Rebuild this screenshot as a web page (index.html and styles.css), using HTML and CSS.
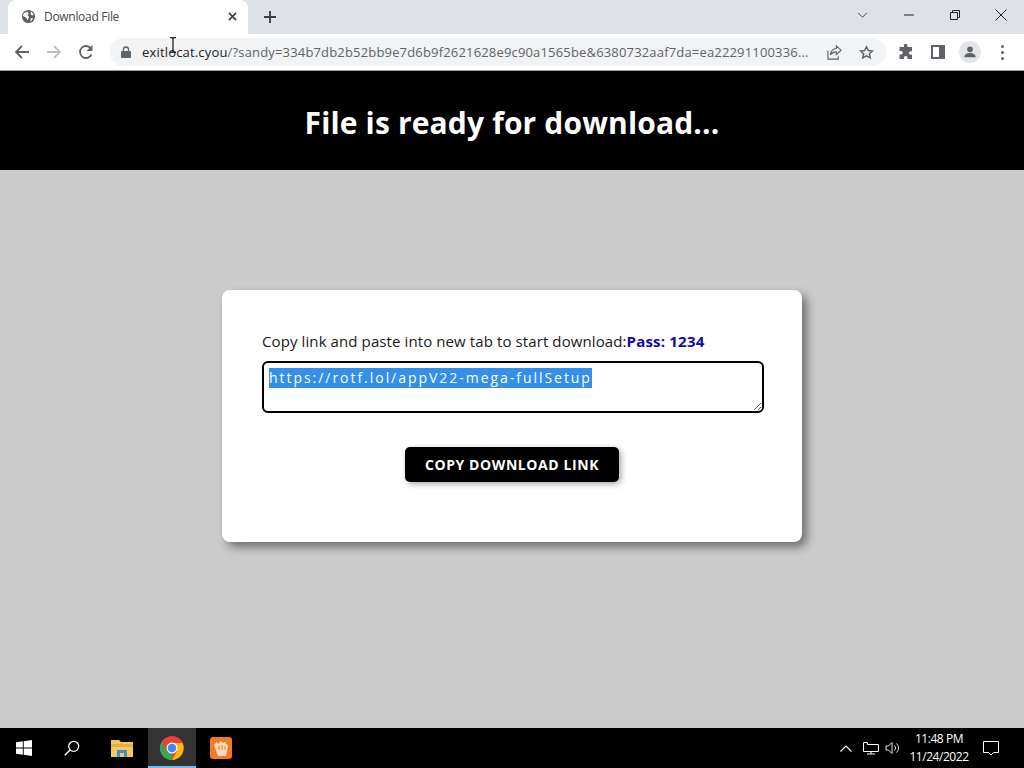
FILE: index.html
```html
<!DOCTYPE html>
<html lang="en">
<head>
<meta charset="utf-8">
<title>Download File</title>
<link rel="stylesheet" href="styles.css">
</head>
<body>
<div class="screen">
  <div class="tabstrip">
    <div class="tab">
      <svg class="favicon" viewBox="0 0 16 16"><circle cx="8" cy="8" r="7" fill="#5f6368"/><path d="M3 4.500 6.500 3l2 1.500L7 6.500 8.500 8.500 7 12 5.500 9 2 7.500zM10.500 2.500l3 3-1 1.500-2-1zM10 10l3-.5-2.500 4z" fill="#fff"/></svg>
      <span class="tab-title">Download File</span>
      <svg class="tab-close" viewBox="0 0 10 10"><path d="M1 1l8 8M9 1l-8 8" stroke="#3c4043" stroke-width="1.800"/></svg>
    </div>
    <svg class="new-tab" viewBox="0 0 12 12"><path d="M6 0v12M0 6h12" stroke="#3c4043" stroke-width="1.900"/></svg>
    <div class="window-controls">
      <svg class="ctl chevron" viewBox="0 0 12 8"><path d="M1 1l5 5 5-5" fill="none" stroke="#3c4043" stroke-width="1.100"/></svg>
      <svg class="ctl minimize" viewBox="0 0 10 2"><path d="M0 1h10" stroke="#222" stroke-width="1"/></svg>
      <svg class="ctl restore" viewBox="0 0 10 10"><path d="M.5 2.500h7v7h-7zM2.500 2.500v-2h7v7h-2" fill="none" stroke="#222" stroke-width="1"/></svg>
      <svg class="ctl closex" viewBox="0 0 12 12"><path d="M.5.500l11 11M11.500.500l-11 11" stroke="#222" stroke-width="1"/></svg>
    </div>
  </div>
  <div class="toolbar">
    <svg class="nav" viewBox="0 0 16 16"><path d="M15 8H2M8 2 2 8l6 6" fill="none" stroke="#5f6368" stroke-width="1.800"/></svg>
    <svg class="nav" viewBox="0 0 16 16"><path d="M1 8h13M8 2l6 6-6 6" fill="none" stroke="#bdc1c6" stroke-width="1.800"/></svg>
    <svg class="nav" viewBox="0 0 16 16"><path d="M13.500 10.500A6 6 0 1 1 13 4.600" fill="none" stroke="#5f6368" stroke-width="1.800"/><path d="M14.500 1v6h-6z" fill="#5f6368"/></svg>
    <div class="omnibox">
      <svg class="lock" viewBox="0 0 10 12"><path d="M2.500 5V3.500a2.500 2.500 0 0 1 5 0V5" fill="none" stroke="#5f6368" stroke-width="1.300"/><rect y="5" width="10" height="7" rx="1" fill="#5f6368"/></svg>
      <span class="url"><span class="host">exitlocat.cyou</span>/?sandy=334b7db2b52bb9e7d6b9f2621628e9c90a1565be&amp;6380732aaf7da=ea22291100336...</span>
      <svg class="omni-icon" viewBox="0 0 16 16"><path d="M10 1l5 4.500L10 10V7.300C7 7.300 5 8.300 3.500 10.500 4 7 6 4 10 3.700zM1 6v9h11v-3" fill="none" stroke="#5f6368" stroke-width="1.200"/></svg>
      <svg class="omni-icon star" viewBox="0 0 16 16"><path d="M8 1.800l1.900 4.100 4.500.5-3.300 3 .9 4.400L8 11.600l-4 2.200.9-4.400-3.300-3 4.500-.5z" fill="none" stroke="#5f6368" stroke-width="1.500"/></svg>
    </div>
    <svg class="ext" viewBox="0 0 16 16"><path d="M6 1.500a1.700 1.700 0 0 1 3.400 0V3H14v4.200h-1.300a1.800 1.800 0 0 0 0 3.600H14V15H9.500v-1.300a1.800 1.800 0 0 0-3.600 0V15H1.500v-4.500H3a1.800 1.800 0 0 0 0-3.600H1.500V3H6z" fill="#5f6368"/></svg>
    <svg class="side" viewBox="0 0 14 14"><rect x="1" y="1" width="12" height="12" fill="none" stroke="#5f6368" stroke-width="2"/><rect x="8" y="1" width="5" height="12" fill="#5f6368"/></svg>
    <div class="avatar"><svg viewBox="0 0 16 16"><circle cx="8" cy="5" r="3.200" fill="#5f6368"/><path d="M1.500 14c0-3.500 3-5 6.500-5s6.500 1.500 6.500 5z" fill="#5f6368"/></svg></div>
    <div class="kebab"><i></i><i></i><i></i></div>
  </div>
  <header class="banner"><h1>File is ready for download...</h1></header>
  <main class="stage">
    <section class="card">
      <p class="lead">Copy link and paste into new tab to start download:<strong>Pass: 1234</strong></p>
      <div class="linkbox"><span class="selected">https://rotf.lol/appV22-mega-fullSetup</span></div>
      <div class="actions"><button class="copy">COPY DOWNLOAD LINK</button></div>
    </section>
  </main>
  <footer class="taskbar">
    <svg class="start" viewBox="0 0 16 16"><path d="M0 2.300 6.800 1.300V7.500H0zM7.700 1.200 16 0v7.500H7.700zM0 8.400h6.800v6.300L0 13.700zM7.700 8.400H16V16l-8.300-1.200z" fill="#fff"/></svg>
    <svg class="search" viewBox="0 0 16 16"><circle cx="9.700" cy="6.300" r="5" fill="none" stroke="#fff" stroke-width="1.300"/><path d="M6 10 .8 15.200" stroke="#fff" stroke-width="1.500"/></svg>
    <svg class="folder" viewBox="0 0 22 18"><path d="M0 1h8l2 2h12v15H0z" fill="#f4c95f"/><path d="M0 5h22v3H0z" fill="#e3b043"/><path d="M6 18v-7h10v7h-3v-4H9v4z" fill="#3f8fd0"/></svg>
    <div class="chrome-slot">
      <svg class="chrome" viewBox="0 0 24 24"><circle cx="12" cy="12" r="12" fill="#ea4335"/><path d="M12 24 A12 12 0 0 1 1.600 6L7 15l5 1z" fill="#34a853"/><path d="M12 7h10.400A12 12 0 0 1 12 24l5-9z" fill="#fbbc05"/><circle cx="12" cy="12" r="5.500" fill="#fff"/><circle cx="12" cy="12" r="4.300" fill="#4285f4"/></svg>
    </div>
    <svg class="app" viewBox="0 0 22 22"><rect width="22" height="22" rx="3" fill="#ef7a27"/><path d="M4 8l3-3 1 2 3-3 2 2 2-1 3 4-2 10H8z" fill="#fbd9bd"/><path d="M9 9v4M12 8v5M15 9v4" stroke="#ef7a27" stroke-width="1"/></svg>
    <div class="tray">
      <svg class="tray-chev" viewBox="0 0 12 7"><path d="M.5 6.500 6 1l5.500 5.500" fill="none" stroke="#fff" stroke-width="1.100"/></svg>
      <svg class="tray-net" viewBox="0 0 16 14"><path d="M.5 1.500h4v2h11v7h-15zM8 10.500v2.500M4 13h8" fill="none" stroke="#fff"/></svg>
      <svg class="tray-vol" viewBox="0 0 16 14"><path d="M1 5h2.500L7 1.500v11L3.500 9H1zM9.500 4.500a3.500 3.500 0 0 1 0 5M11.500 2.500a6 6 0 0 1 0 9" fill="none" stroke="#fff" stroke-width=".9"/></svg>
      <div class="clock"><span>11:48 PM</span><span>11/24/2022</span></div>
      <svg class="notif" viewBox="0 0 16 15"><path d="M.5.500h15v11h-5L8 14l-2.500-2.500h-5z" fill="none" stroke="#fff"/></svg>
    </div>
  </footer>
  <svg class="ibeam" viewBox="0 0 8 16"><path d="M1 .5h2l1 1 1-1h2M4 1.500v13M1 15.500h2l1-1 1 1h2" fill="none" stroke="#222" stroke-width="1.300"/></svg>
</div>
</body>
</html>
```
FILE: styles.css
```css
* { box-sizing: border-box; }
html, body { margin: 0; padding: 0; }
body { font-family: "Open Sans", "Noto Sans", sans-serif; overflow: hidden; }
svg { display: block; flex: none; }

.screen { position: relative; width: 1024px; height: 768px; display: flex; flex-direction: column; background: #cbcbcb; }

.tabstrip { height: 34px; background: #dee1e6; display: flex; align-items: flex-start; padding-left: 8px; flex: none; }
.tab { width: 240px; height: 34px; background: #fff; border-radius: 8px 8px 0 0; display: flex; align-items: center; padding: 0 10px 1px 13px; }
.favicon { width: 15px; height: 15px; }
.tab-title { font-size: 12px; color: #45484c; margin-left: 8px; flex: 1; letter-spacing: -.3px; white-space: nowrap; }
.tab-close { width: 9px; height: 9px; margin-right: 1px; }
.new-tab { width: 12px; height: 12px; margin: 11px 0 0 16px; }
.window-controls { margin-left: auto; height: 30px; display: flex; align-items: center; }
.ctl { flex: none; }
.chevron { width: 11px; height: 7px; margin-right: 36px; }
.minimize { width: 10px; height: 2px; margin-right: 36px; }
.restore { width: 10px; height: 10px; margin-right: 35px; }
.closex { width: 12px; height: 12px; margin-right: 17px; }

.toolbar { height: 37px; background: #fff; display: flex; align-items: center; padding-left: 14px; flex: none; border-bottom: 1px solid #9a9a9a; }
.nav { width: 16px; height: 16px; margin-right: 16px; }
.omnibox { width: 776px; height: 28px; border-radius: 14px; background: #f1f3f4; display: flex; align-items: center; padding-left: 11px; }
.lock { width: 10px; height: 12px; }
.url { font-size: 13px; color: #5f6368; margin-left: 11px; width: 668px; white-space: nowrap; overflow: hidden; letter-spacing: .17px; }
.host { color: #202124; }
.omni-icon { width: 15px; height: 15px; margin-left: 17px; }
.omni-icon.star { margin-left: 17px; }
.ext { width: 16px; height: 16px; margin-left: 12px; }
.side { width: 14px; height: 14px; margin-left: 17px; }
.avatar { width: 22px; height: 22px; border-radius: 50%; background: #e3e5e8; margin-left: 14px; display: flex; align-items: center; justify-content: center; }
.avatar svg { width: 14px; height: 14px; }
.kebab { display: flex; flex-direction: column; gap: 3px; margin-left: 20px; }
.kebab i { width: 3px; height: 3px; border-radius: 50%; background: #5f6368; display: block; }

.banner { height: 99px; background: #000; display: flex; align-items: center; justify-content: center; flex: none; padding-top: 4px; }
.banner h1 { margin: 0; color: #fff; font-size: 30px; font-weight: 700; letter-spacing: .15px; }

.stage { flex: 1; display: flex; justify-content: center; padding-top: 120px; background: #cbcbcb; }
.card { width: 580px; height: 252px; background: #fff; border-radius: 8px; box-shadow: 5px 5px 10px rgba(0,0,0,.45); padding: 41px 38px 0 40px; }
.lead { margin: 0; font-size: 15px; line-height: 20px; color: #1a1a1a; white-space: nowrap; letter-spacing: .1px; }
.lead strong { font-weight: 700; color: #1208a8; letter-spacing: .2px; }
.linkbox { width: 502px; height: 52px; margin-top: 10px; border: 2px solid #000; border-radius: 6px; background: #fff; padding: 5px; font-size: 14px; line-height: 20px; letter-spacing: 1.96px; color: #fff; resize: both; overflow: hidden; white-space: nowrap; }
.selected { background: #338fe8; display: inline-block; }
.actions { display: flex; justify-content: center; margin-top: 34px; padding-right: 2px; }
.copy { width: 214px; height: 35px; background: #000; color: #fff; border: 0; border-radius: 5px; font: 700 14px "Open Sans", "Noto Sans", sans-serif; letter-spacing: .58px; box-shadow: 2px 2px 6px rgba(0,0,0,.35); padding: 0; }

.taskbar { height: 40px; background: #000; display: flex; align-items: center; flex: none; }
.start { width: 16px; height: 16px; margin-left: 16px; }
.search { width: 16px; height: 16px; margin-left: 32px; }
.folder { width: 22px; height: 18px; margin-left: 31px; }
.chrome-slot { width: 48px; height: 40px; background: #333; border-bottom: 2px solid #76b9ed; margin-left: 15px; display: flex; align-items: center; justify-content: center; padding-top: 1px; }
.chrome { width: 24px; height: 24px; }
.app { width: 22px; height: 22px; margin-left: 14px; }
.tray { margin-left: auto; display: flex; align-items: center; color: #fff; }
.tray-chev { width: 12px; height: 7px; margin-right: 11px; }
.tray-net { width: 16px; height: 14px; margin-right: 6px; }
.tray-vol { width: 16px; height: 14px; }
.clock { width: 76px; display: flex; flex-direction: column; align-items: center; font: 12px/18px "Open Sans", sans-serif; letter-spacing: -.45px; }
.notif { width: 16px; height: 15px; margin: 0 25px 0 6px; }

.ibeam { position: absolute; left: 169px; top: 37px; width: 8px; height: 16px; }
```
